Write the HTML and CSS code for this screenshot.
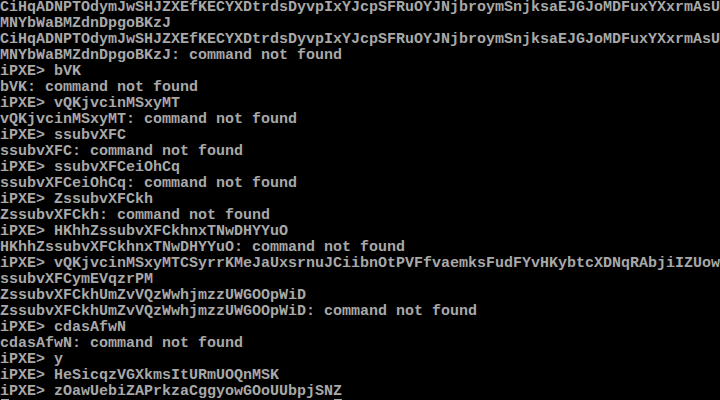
FILE: index.html
```html
<!DOCTYPE html>
<html>
<head>
<meta charset="utf-8">
<link rel="stylesheet" href="styles.css">
</head>
<body>
<pre class="console">CiHqADNPTOdymJwSHJZXEfKECYXDtrdsDyvpIxYJcpSFRuOYJNjbroymSnjksaEJGJoMDFuxYXxrmAsU
MNYbWaBMZdnDpgoBKzJ
CiHqADNPTOdymJwSHJZXEfKECYXDtrdsDyvpIxYJcpSFRuOYJNjbroymSnjksaEJGJoMDFuxYXxrmAsU
MNYbWaBMZdnDpgoBKzJ: command not found
iPXE&gt; bVK
bVK: command not found
iPXE&gt; vQKjvcinMSxyMT
vQKjvcinMSxyMT: command not found
iPXE&gt; ssubvXFC
ssubvXFC: command not found
iPXE&gt; ssubvXFCeiOhCq
ssubvXFCeiOhCq: command not found
iPXE&gt; ZssubvXFCkh
ZssubvXFCkh: command not found
iPXE&gt; HKhhZssubvXFCkhnxTNwDHYYuO
HKhhZssubvXFCkhnxTNwDHYYuO: command not found
iPXE&gt; vQKjvcinMSxyMTCSyrrKMeJaUxsrnuJCiibnOtPVFfvaemksFudFYvHKybtcXDNqRAbjiIZUow
ssubvXFCymEVqzrPM
ZssubvXFCkhUmZvVQzWwhjmzzUWGOOpWiD
ZssubvXFCkhUmZvVQzWwhjmzzUWGOOpWiD: command not found
iPXE&gt; cdasAfwN
cdasAfwN: command not found
iPXE&gt; y
iPXE&gt; HeSicqzVGXkmsItURmUOQnMSK
<span class="cur">i</span>PXE&gt; zOawUebiZAPrkzaCggyowGOoUUbpjSN<span class="cur">Z</span></pre>
</body>
</html>
```
FILE: styles.css
```css
html, body {
  margin: 0;
  padding: 0;
  background: #000;
  width: 720px;
  height: 400px;
  overflow: hidden;
}
.console {
  margin: 0;
  padding: 0;
  font-family: "Liberation Mono", "DejaVu Sans Mono", monospace;
  font-size: 15px;
  line-height: 16px;
  font-weight: bold;
  color: #a8a8a8;
  white-space: pre;
}
.cur {
  position: relative;
}
.cur::after {
  content: "";
  position: absolute;
  left: 1px;
  right: 0;
  bottom: -1px;
  height: 2px;
  background: #a8a8a8;
}
```
